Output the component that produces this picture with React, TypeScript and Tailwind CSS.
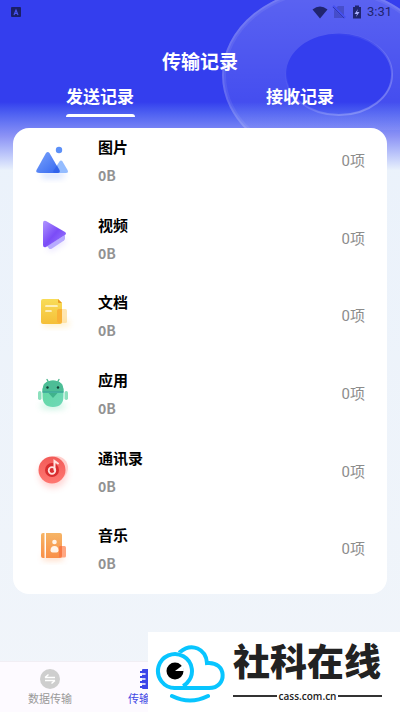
import React from "react";

type RecordType = {
  title: string;
  size: string;
  count: string;
  icon: React.ReactNode;
};

const PhotoIcon = () => (
  <svg viewBox="0 -2 48 48" className="size-12" aria-hidden="true">
    <defs>
      <linearGradient id="photo" x1="0" y1="0" x2="1" y2="1">
        <stop offset="0" stopColor="#7ba4fb" />
        <stop offset="1" stopColor="#3366f0" />
      </linearGradient>
      <filter id="soft" x="-50%" y="-100%" width="200%" height="300%">
        <feGaussianBlur stdDeviation="3" />
      </filter>
    </defs>
    <path d="M11 33h26l-4 5H14z" fill="#5f8cff" opacity=".3" filter="url(#soft)" />
    <path d="M27 33h10q3 0 1.500-3l-5-8.500q-1.500-2-3 0l-6 9q-1 2.500 2.500 2.500z" fill="#94bcff" />
    <path d="M11 33h17q4 0 2-3.500L20.500 13q-1.800-2-3.500 0L7.500 30q-1.500 3 3.500 3z" fill="url(#photo)" />
    <path d="M26 33h2.500q3 0 2-3l-2.500-4.500-3.500 5q-1 2.500 1.500 2.500z" fill="#2b5be8" opacity=".6" />
    <circle cx="30" cy="10" r="3.200" fill="#5c90f8" />
  </svg>
);

const VideoIcon = () => (
  <svg viewBox="0 4 48 48" className="size-12" aria-hidden="true">
    <defs>
      <linearGradient id="video" x1="0" y1="0" x2="1" y2="1">
        <stop offset="0" stopColor="#b096ff" />
        <stop offset=".5" stopColor="#7b4cf7" />
        <stop offset="1" stopColor="#9c7dff" />
      </linearGradient>
    </defs>
    <path d="M18 36l18-11v5L22 39z" fill="#9d86ff" opacity=".3" filter="url(#soft)" />
    <path d="M18 34l18-11v3.500q0 1-1 2l-12 8q-2 1-3 0z" fill="#b7aaff" />
    <path d="M14 11q0-3 3-2l19 11q2 1.500 0 3L17 35q-3 1-3-2z" fill="url(#video)" />
  </svg>
);

const DocIcon = () => (
  <svg viewBox="-1 3 48 48" className="size-12" aria-hidden="true">
    <defs>
      <linearGradient id="doc" x1="0" y1="0" x2="0" y2="1">
        <stop offset="0" stopColor="#f8dc58" />
        <stop offset="1" stopColor="#f5bf38" />
      </linearGradient>
    </defs>
    <path d="M14 31h25v5H14z" fill="#ffc94a" opacity=".35" filter="url(#soft)" />
    <path d="M13 9h15l4 4v19q0 2-2 2H13q-2 0-2-2V11q0-2 2-2z" fill="url(#doc)" />
    <path d="M28 9l4 4h-3q-1 0-1-1z" fill="#e99a22" />
    <rect x="27" y="19" width="10" height="14" rx="1.500" fill="#ffd987" opacity=".65" />
    <path d="M27 20.500q0-1.500 1.500-1.500H32v13q0 1-1 1h-2.500q-1.500 0-1.500-1.500z" fill="#f7a928" opacity=".8" />
    <path d="M16 16h11M16 21h5" stroke="#fff8dc" strokeWidth="1.700" strokeLinecap="round" />
  </svg>
);

const AndroidIcon = () => (
  <svg viewBox="0 1 48 48" className="size-12" aria-hidden="true">
    <defs>
      <linearGradient id="robot" x1="0" y1="0" x2="1" y2="1">
        <stop offset="0" stopColor="#62d9a0" />
        <stop offset="1" stopColor="#6ed8b8" />
      </linearGradient>
    </defs>
    <ellipse cx="24" cy="36" rx="13" ry="3" fill="#62dcaa" opacity=".4" filter="url(#soft)" />
    <path d="M20 13l-2-3.500M28 13l2-3.500" stroke="#48b48a" strokeWidth="1.400" strokeLinecap="round" />
    <rect x="9" y="21" width="3.500" height="9" rx="1.700" fill="#8de0bd" />
    <rect x="35.500" y="21" width="3.500" height="9" rx="1.700" fill="#8de0bd" />
    <path d="M13.500 21q0-10.500 10.500-10.500T34.500 21v5q0 11-10.500 11T13.500 26z" fill="url(#robot)" />
    <path d="M13.500 21q0-10.500 10.500-10.500T34.500 21v1h-21z" fill="#4dbd96" />
    <path d="M13.500 21.500h21v1.200h-21z" fill="#379f9a" />
    <path d="M19.500 23h9L24 28z" fill="#3fb38c" />
    <circle cx="18.500" cy="17.500" r="1.200" fill="#143f35" />
    <circle cx="29" cy="17.500" r="1.200" fill="#143f35" />
  </svg>
);

const MusicIcon = () => (
  <svg viewBox="0 1 48 48" className="size-12" aria-hidden="true">
    <defs>
      <linearGradient id="disc" x1="0" y1="0" x2="0" y2="1">
        <stop offset="0" stopColor="#f25b58" />
        <stop offset="1" stopColor="#ff7771" />
      </linearGradient>
    </defs>
    <circle cx="24" cy="26" r="14" fill="#ff6c68" opacity=".28" filter="url(#soft)" />
    <circle cx="27" cy="20" r="12" fill="#ffcfcc" />
    <circle cx="23" cy="22" r="13.500" fill="url(#disc)" />
    <circle cx="23" cy="22" r="7" fill="#d92d2f" />
    <circle cx="23" cy="22.500" r="3.300" fill="none" stroke="#ffe3df" strokeWidth="1.800" />
    <path d="M25.500 22V13l3.500 2.500" fill="none" stroke="#ffe3df" strokeWidth="2" strokeLinecap="round" />
  </svg>
);

const ContactIcon = () => (
  <svg viewBox="0 2 48 48" className="size-12" aria-hidden="true">
    <defs>
      <linearGradient id="book" x1="0" y1="0" x2="0" y2="1">
        <stop offset="0" stopColor="#f6b566" />
        <stop offset="1" stopColor="#f98f48" />
      </linearGradient>
    </defs>
    <path d="M14 31h20v5H14z" fill="#ff9350" opacity=".4" filter="url(#soft)" />
    <path d="M14 9h1.500v25H14q-2 0-2-2V11q0-2 2-2zM17 9h14q2 0 2 2v21q0 2-2 2H17z" fill="url(#book)" />
    <rect x="30" y="22" width="7" height="11.500" rx="1.500" fill="#ffa681" />
    <path d="M31 22h2v10q0 1.500-2 1.500h-1V23q0-1 1-1z" fill="#f87a45" />
    <circle cx="25.500" cy="18" r="2.300" fill="#fff3e8" />
    <path d="M21.500 26.500q0-4.500 4-4.500t4 4.500q0 2-2 2h-4q-2 0-2-2z" fill="#fff3e8" />
  </svg>
);

const records: RecordType[] = [
  { title: "图片", size: "0B", count: "0项", icon: <PhotoIcon /> },
  { title: "视频", size: "0B", count: "0项", icon: <VideoIcon /> },
  { title: "文档", size: "0B", count: "0项", icon: <DocIcon /> },
  { title: "应用", size: "0B", count: "0项", icon: <AndroidIcon /> },
  { title: "通讯录", size: "0B", count: "0项", icon: <MusicIcon /> },
  { title: "音乐", size: "0B", count: "0项", icon: <ContactIcon /> },
];

const StatusBar = () => (
  <div className="flex h-6 items-center justify-between pr-2 pl-[11px] text-[#20256f]">
    <svg viewBox="0 0 10 10" className="size-[10px]" aria-hidden="true">
      <rect width="10" height="10" rx="1" fill="#1a1f66" />
      <path d="M3 8l2-5 2 5M3.700 6.400h2.600" fill="none" stroke="#4a55ee" strokeWidth="1.200" />
    </svg>
    <div className="flex items-center">
      <svg viewBox="0 0 50 14" className="h-[14px] w-[50px]" aria-hidden="true">
        <path d="M8 13.500L.5 4.500q7.500-6 15 0z" fill="currentColor" />
        <path d="M22 5l4-4h6v12H22z" fill="currentColor" opacity=".3" />
        <path d="M21 1l12 12" stroke="#4650ef" strokeWidth="2.500" />
        <path d="M21 2l11 11" stroke="currentColor" strokeWidth="1" opacity=".5" />
        <path d="M41 2h2V.5h4V2h2v11.500h-8z" fill="currentColor" />
        <path d="M46 4l-3.500 5H45l-1 3 3.500-5H45z" fill="#aab0ff" />
      </svg>
      <span className="ml-[5px] font-['Roboto',sans-serif] text-[13px] leading-[14px]">3:31</span>
    </div>
  </div>
);

const RingArt = () => (
  <svg viewBox="0 0 200 130" className="absolute top-0 right-0 h-[130px] w-[200px]" aria-hidden="true">
    <defs>
      <linearGradient id="ring" x1="0" y1="0" x2="0" y2="1">
        <stop offset="0" stopColor="#fff" stopOpacity=".2" />
        <stop offset="1" stopColor="#fff" stopOpacity=".02" />
      </linearGradient>
      <linearGradient id="rim" x1="0" y1="0" x2="1" y2="1">
        <stop offset=".2" stopColor="#fff" stopOpacity="0" />
        <stop offset="1" stopColor="#fff" stopOpacity=".3" />
      </linearGradient>
    </defs>
    <path
      d="M22 75a108 87 0 1 0 216 0a108 87 0 1 0-216 0zM86 74a53 40.500 0 1 1 106 0a53 40.500 0 1 1-106 0z"
      fill="url(#ring)"
      fillRule="evenodd"
    />
    <ellipse cx="130" cy="75" rx="106" ry="85" fill="none" stroke="#fff" strokeOpacity=".07" strokeWidth="4" />
    <ellipse cx="130" cy="75" rx="107" ry="86" fill="none" stroke="#fff" strokeOpacity=".1" strokeWidth="2" />
    <ellipse cx="139" cy="74.500" rx="53" ry="40.500" fill="none" stroke="url(#rim)" strokeWidth="2" />
  </svg>
);

const SiteBadge = () => (
  <div className="absolute right-0 bottom-0 flex h-20 w-[252px] items-center bg-white pl-[7px] text-[#222]">
    <svg viewBox="0 0 70 62" className="h-[62px] w-[70px] shrink-0" aria-hidden="true">
      <g fill="none" stroke="#08c5ff" strokeWidth="4" strokeLinecap="round">
        <path d="M25 11C37 1 51 8 52 22C72 20 73 47 54 47H20" />
        <path d="M17 55q18 9 36 0" />
      </g>
      <path d="M20 30m-19 0a19 19 0 0 1 38 0q0 9-6 15H20a17 17 0 0 1-19-15z" fill="#fff" />
      <path d="M20 47a17 17 0 1 1 12-5q-1.500 1.800-4 3M20 47h10" fill="none" stroke="#08c5ff" strokeWidth="4" />
      <circle cx="20" cy="30" r="8.500" fill="#000" />
      <path d="M20 30l8-6 1 6z" fill="#fff" />
    </svg>
    <div className="ml-2 flex w-[149px] flex-col">
      <span className="text-[37px] leading-[44px] font-black whitespace-nowrap">社科在线</span>
      <div className="mt-1 flex items-center gap-[2px]">
        <span className="h-[2px] flex-1 bg-[#333]" />
        <span className="font-['Open_Sans',sans-serif] text-[10px] leading-3 font-semibold">cass.com.cn</span>
        <span className="h-[2px] flex-1 bg-[#333]" />
      </div>
    </div>
  </div>
);

const App = () => {
  return (
    <div className="relative flex min-h-screen flex-col overflow-hidden bg-linear-to-b from-[#e9f1fb] to-[#f1f5fa] font-['Roboto','Noto_Sans_CJK_SC',sans-serif]">
      <div className="absolute inset-x-0 top-0 h-[170px] bg-linear-to-b from-[#343eee] from-60% via-[#8c92f5] via-80% to-[#e9f1fb]">
        <RingArt />
      </div>

      <header className="relative text-white">
        <StatusBar />
        <h1 className="mt-[25px] text-center text-[19px] leading-7 font-bold">传输记录</h1>
        <div className="mt-2 grid grid-cols-2 text-[17px] leading-6 font-bold">
          <button className="flex flex-col items-center gap-[5px]">
            发送记录
            <span className="h-[3px] w-[69px] rounded-t-full bg-white" />
          </button>
          <button className="flex flex-col items-center">接收记录</button>
        </div>
      </header>

      <main className="relative mx-[13px] mt-[11px] mb-[67px] flex flex-1 flex-col">
        <ul className="grid flex-1 auto-rows-fr rounded-2xl bg-white">
          {records.map((item) => (
            <li className="flex items-start pr-[22px] pl-4" key={item.title}>
              <div className="mt-[10px]">{item.icon}</div>
              <div className="ml-[21px] flex-1 pt-[9px]">
                <h2 className="text-[15px] leading-[22px] font-bold text-black">{item.title}</h2>
                <p className="mt-[6px] font-['Noto_Sans_CJK_SC',sans-serif] text-sm leading-5 font-bold text-[#929292]">
                  {item.size}
                </p>
              </div>
              <span className="mt-[23px] text-[15px] leading-5 text-[#8c8c8c]">{item.count}</span>
            </li>
          ))}
        </ul>
      </main>

      <nav className="relative grid h-[51px] grid-cols-4 border-t border-[#f1eef4] bg-[#fdfaff] text-[11px] leading-4">
        <a href="#transfer" className="flex flex-col items-center gap-[3px] pt-[7px] text-[#999]">
          <svg viewBox="0 0 20 20" className="size-5" aria-hidden="true">
            <circle cx="10" cy="10" r="10" fill="#cecece" />
            <path d="M5 8.500h10M5 8.500l3.500-3M15 11.500H5M15 11.500l-3.500 3" fill="none" stroke="#fff" strokeWidth="1.500" />
          </svg>
          数据传输
        </a>
        <a href="#records" className="flex flex-col items-center gap-[3px] pt-[7px] text-[#4048e4]">
          <svg viewBox="0 0 20 20" className="size-5" aria-hidden="true">
            <rect x="2" width="17" height="20" rx="1" fill="#3b45e8" />
            <path d="M0 3h5M0 8h5M0 13h5M0 18h5" stroke="#3b45e8" strokeWidth="2" />
            <path d="M2 5h3M2 10h3M2 15h3" stroke="#fff" strokeWidth="1.500" strokeLinecap="round" />
          </svg>
          传输记录
        </a>
      </nav>
      <SiteBadge />
    </div>
  );
};

export default App;
